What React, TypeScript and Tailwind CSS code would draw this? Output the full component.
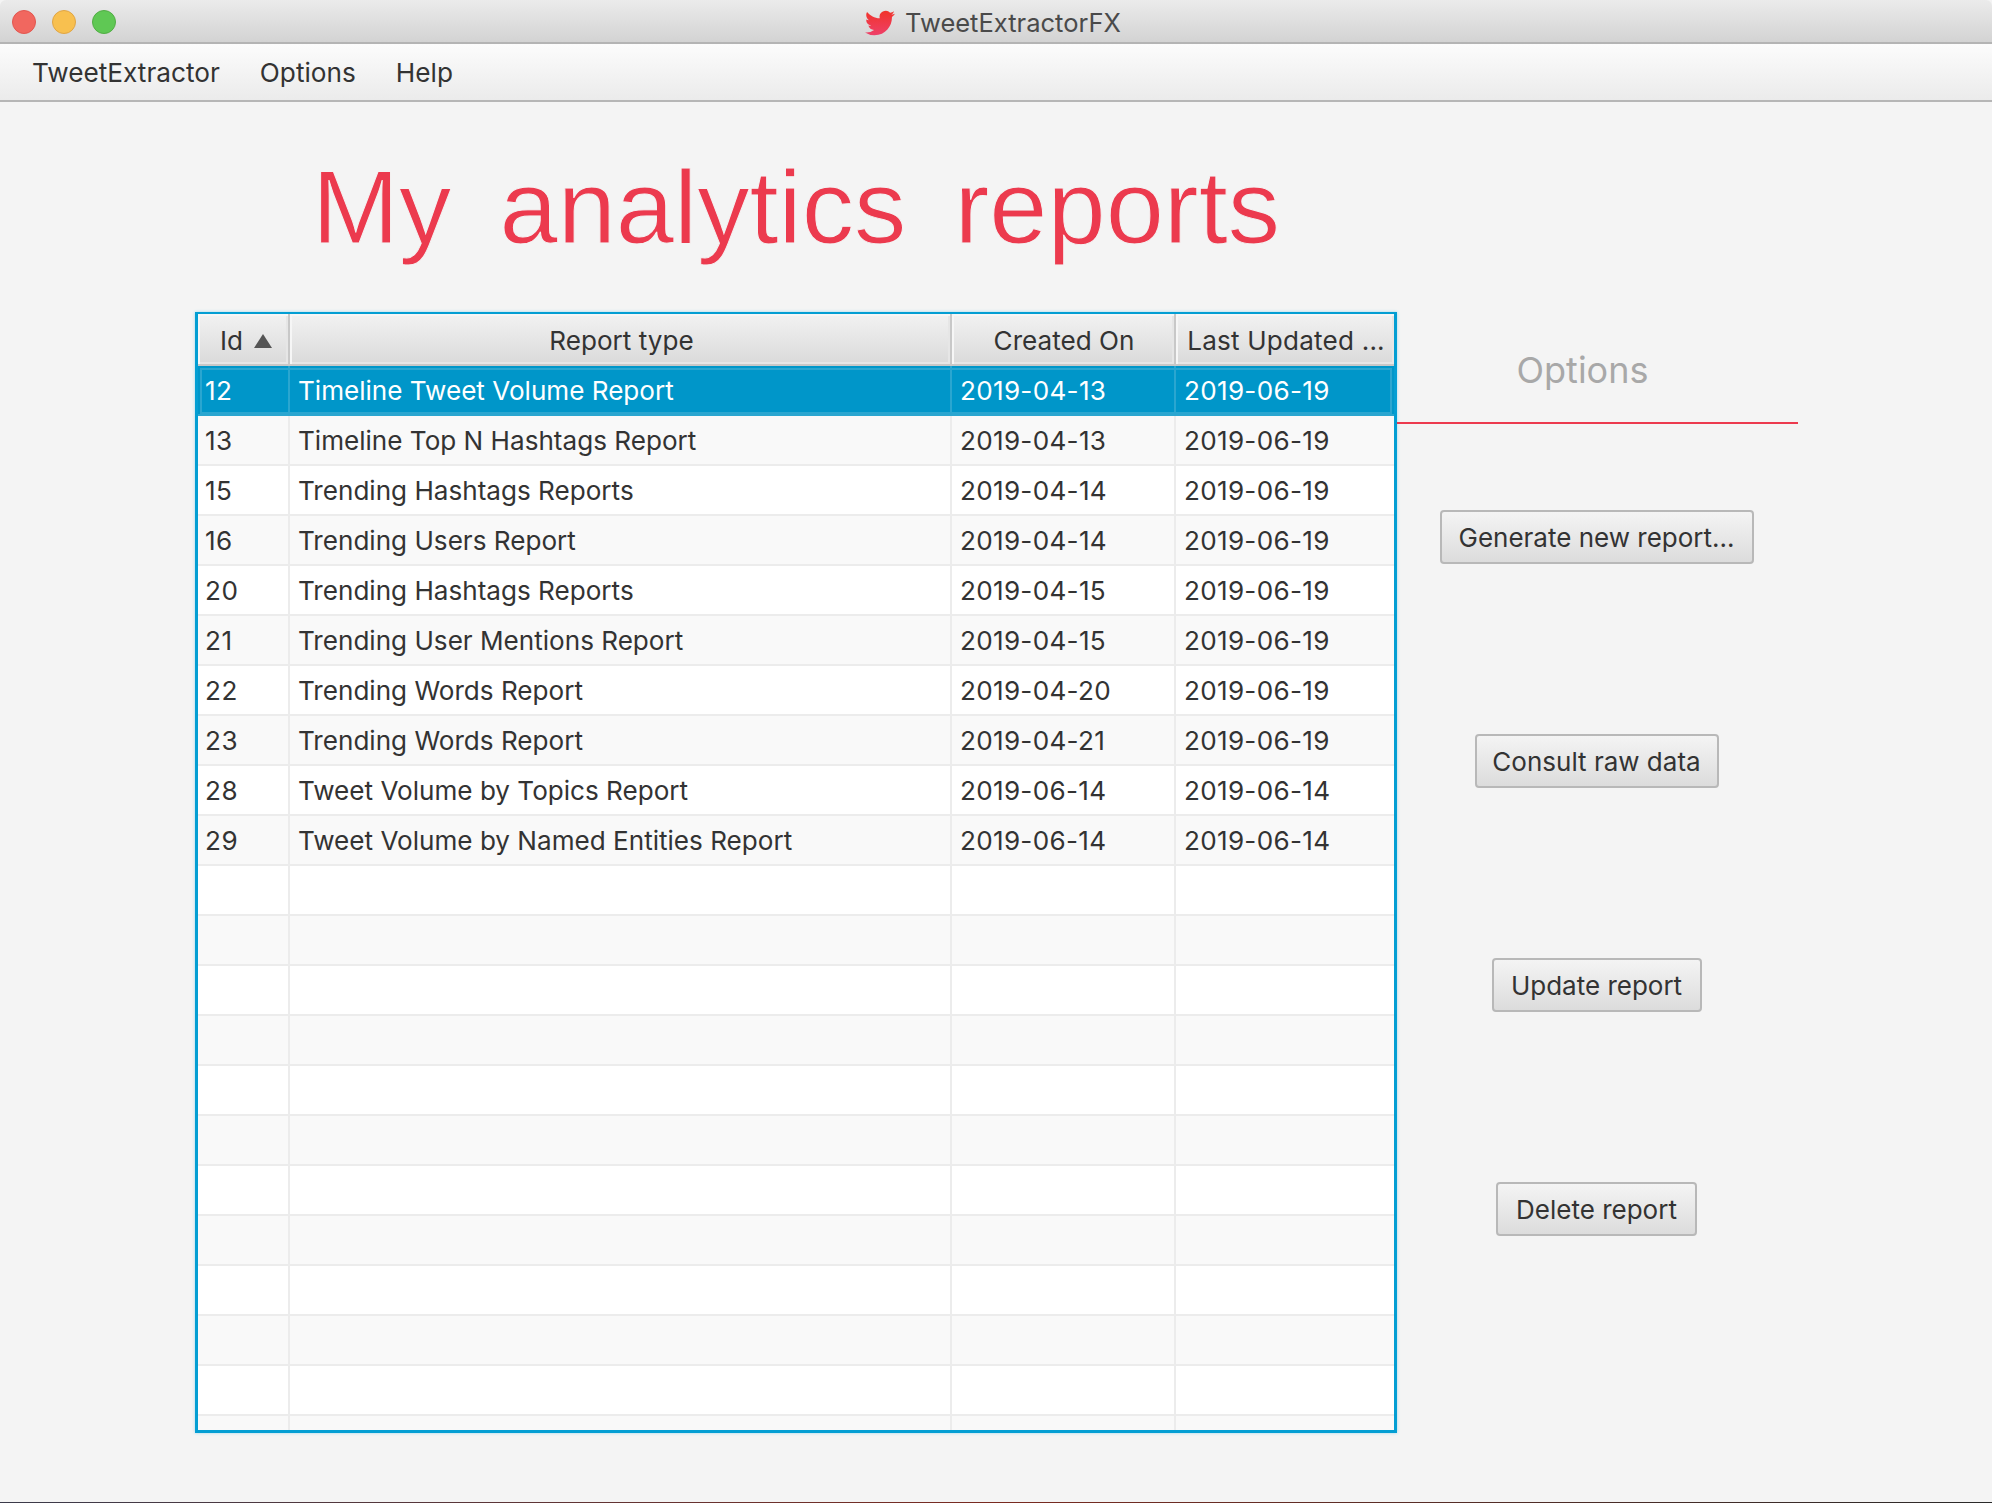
import React from "react"

const reports = [
  { id: "12", type: "Timeline Tweet Volume Report", created: "2019-04-13", updated: "2019-06-19" },
  { id: "13", type: "Timeline Top N Hashtags Report", created: "2019-04-13", updated: "2019-06-19" },
  { id: "15", type: "Trending Hashtags Reports", created: "2019-04-14", updated: "2019-06-19" },
  { id: "16", type: "Trending Users Report", created: "2019-04-14", updated: "2019-06-19" },
  { id: "20", type: "Trending Hashtags Reports", created: "2019-04-15", updated: "2019-06-19" },
  { id: "21", type: "Trending User Mentions Report", created: "2019-04-15", updated: "2019-06-19" },
  { id: "22", type: "Trending Words Report", created: "2019-04-20", updated: "2019-06-19" },
  { id: "23", type: "Trending Words Report", created: "2019-04-21", updated: "2019-06-19" },
  { id: "28", type: "Tweet Volume by Topics Report", created: "2019-06-14", updated: "2019-06-14" },
  { id: "29", type: "Tweet Volume by Named Entities Report", created: "2019-06-14", updated: "2019-06-14" },
]

// 22 rows fit, the last one is cut by the table's edge
const rows = Array.from({ length: 22 }, (_, i) => reports[i] ?? null)

const actions = [
  { label: "Generate new report...", width: "w-[314px]" },
  { label: "Consult raw data", width: "w-[244px]" },
  { label: "Update report", width: "w-[210px]" },
  { label: "Delete report", width: "w-[201px]" },
]

function TwitterBird() {
  return (
    <svg viewBox="0 0 24 24" className="h-[30px] w-[32px]">
      <defs>
        <linearGradient id="bird" x1="0" y1="0" x2="0" y2="1">
          <stop offset="0" stopColor="#f1332a" />
          <stop offset="1" stopColor="#ee4069" />
        </linearGradient>
      </defs>
      <path
        fill="url(#bird)"
        d="M23.953 4.57a10 10 0 01-2.825.775 4.958 4.958 0 002.163-2.723c-.951.555-2.005.959-3.127 1.184a4.92 4.92 0 00-8.384 4.482C7.69 8.095 4.067 6.13 1.64 3.162a4.822 4.822 0 00-.666 2.475c0 1.71.87 3.213 2.188 4.096a4.904 4.904 0 01-2.228-.616v.06a4.923 4.923 0 003.946 4.827 4.996 4.996 0 01-2.212.085 4.936 4.936 0 004.604 3.417 9.867 9.867 0 01-6.102 2.105c-.39 0-.779-.023-1.17-.067a13.995 13.995 0 007.557 2.209c9.053 0 13.998-7.496 13.998-13.985 0-.21 0-.42-.015-.63A9.935 9.935 0 0024 4.59z"
      />
    </svg>
  )
}

function TitleBar() {
  return (
    <div className="relative flex h-[44px] shrink-0 items-center justify-center rounded-t-[6px] border-b-2 border-[#b4b4b4] bg-gradient-to-b from-[#ebebeb] to-[#d3d3d3]">
      <div className="absolute left-[12px] top-[10px] flex gap-[16px]">
        <span className="h-[24px] w-[24px] rounded-full border border-[#e2564f] bg-[#f1675f]" />
        <span className="h-[24px] w-[24px] rounded-full border border-[#e0a545] bg-[#f8c04f]" />
        <span className="h-[24px] w-[24px] rounded-full border border-[#52ad45] bg-[#5fc854]" />
      </div>
      <div className="flex items-center gap-[9px] pr-[7px] pt-[3px]">
        <TwitterBird />
        <span className="text-[25.5px] leading-[30px] text-[#4a4a4a]">TweetExtractorFX</span>
      </div>
    </div>
  )
}

function MenuBar() {
  return (
    <div className="flex h-[58px] shrink-0 items-center gap-[40px] border-b-2 border-[#b6b6b6] bg-gradient-to-b from-[#fcfcfc] to-[#ebebeb] pl-[32px] pt-[2px] text-[26.2px] text-[#333333]">
      <span>TweetExtractor</span>
      <span>Options</span>
      <span>Help</span>
    </div>
  )
}

function ReportsTable() {
  const headerCell = "flex items-center justify-center pt-[3px] shadow-[inset_2px_2px_0_#f6f6f6,inset_-2px_-2px_0_#e6e6e6]"
  return (
    <div className="h-[1121px] w-[1202px] overflow-hidden border-[3px] border-t-2 border-[#039ed3] bg-white text-[26.1px] text-[#333333] shadow-[0_0_3px_#9fd8ec]">
      <div className="grid h-[52px] grid-cols-[92px_662px_224px_1fr] border-b-2 border-[#c8c8c8] bg-gradient-to-b from-[#f2f2f2] to-[#dadada]">
        <div className={`${headerCell} gap-[11px] border-r-2 border-[#c8c8c8] pl-[6px]`}>
          <span>Id</span>
          <svg viewBox="0 0 18 14" className="h-[14px] w-[18px]">
            <path d="M9 0 18 14H0Z" fill="#555555" />
          </svg>
        </div>
        <div className={`${headerCell} border-r-2 border-[#c8c8c8] pl-[3px]`}>Report type</div>
        <div className={`${headerCell} border-r-2 border-[#c8c8c8] pl-[2px]`}>Created On</div>
        <div className={`${headerCell} whitespace-nowrap tracking-[0.2px] pl-[2px]`}>Last Updated ...</div>
      </div>
      {rows.map((row, i) => {
        const selected = i === 0
        const rowColor = selected
          ? "bg-[#0096c9] text-white border-[#2aa6d0] outline-2 -outline-offset-4 outline-[#2aa6d0]"
          : i % 2 === 1
            ? "bg-[#f9f9f9] border-[#ececec]"
            : "bg-white border-[#ececec]"
        const divider = selected ? "border-[#2aa6d0]" : "border-[#ececec]"
        return (
          <div
            key={i}
            className={`grid h-[50px] grid-cols-[92px_662px_224px_1fr] items-stretch border-b-2 ${rowColor}`}
          >
            <div className={`flex items-center border-r-2 pl-[7px] pt-[2px] tracking-[0.5px] ${divider}`}>{row?.id}</div>
            <div className={`flex items-center border-r-2 pl-[8px] pt-[2px] ${divider}`}>{row?.type}</div>
            <div className={`flex items-center border-r-2 pl-[8px] pt-[2px] tracking-[0.3px] ${divider}`}>{row?.created}</div>
            <div className="flex items-center pl-[8px] pt-[2px] tracking-[0.3px]">{row?.updated}</div>
          </div>
        )
      })}
    </div>
  )
}

function OptionsPanel() {
  return (
    <div className="flex w-[401px] flex-col pt-[229px]">
      <div className="flex h-[93px] items-center justify-center border-b-2 border-[#ec3a4e] pb-[13px] pr-[30px] text-[36px] text-[#a8a8a8]">
        Options
      </div>
      <div className="mt-[86px] flex flex-col items-center gap-[170px] pr-[2px]">
        {actions.map((action) => (
          <button
            key={action.label}
            className={`h-[54px] ${action.width} rounded-[4px] border-2 border-[#b8b8b8] bg-gradient-to-b from-[#f4f4f4] to-[#dcdcdc] text-[26px] text-[#333333]`}
          >
            {action.label}
          </button>
        ))}
      </div>
    </div>
  )
}

export default function App() {
  return (
    <div className="flex h-[1503px] w-[1992px] flex-col overflow-hidden bg-[#f4f4f4] font-['Inter','Liberation_Sans',sans-serif]">
      <TitleBar />
      <MenuBar />
      <main className="flex flex-1 pl-[195px]">
        <div className="flex w-[1202px] shrink-0 flex-col">
          <h1 className="flex h-[210px] items-center justify-center font-['Liberation_Sans',sans-serif] text-[104.6px] font-normal text-[#ec3a4e] [-webkit-text-stroke:1px_#f4f4f4] [word-spacing:19px]">
            My analytics reports
          </h1>
          <ReportsTable />
        </div>
        <OptionsPanel />
      </main>
      <div className="h-px shrink-0 bg-gradient-to-r from-[#3a3a4a] via-[#7a2a20] to-[#2a2a2a]" />
    </div>
  )
}
